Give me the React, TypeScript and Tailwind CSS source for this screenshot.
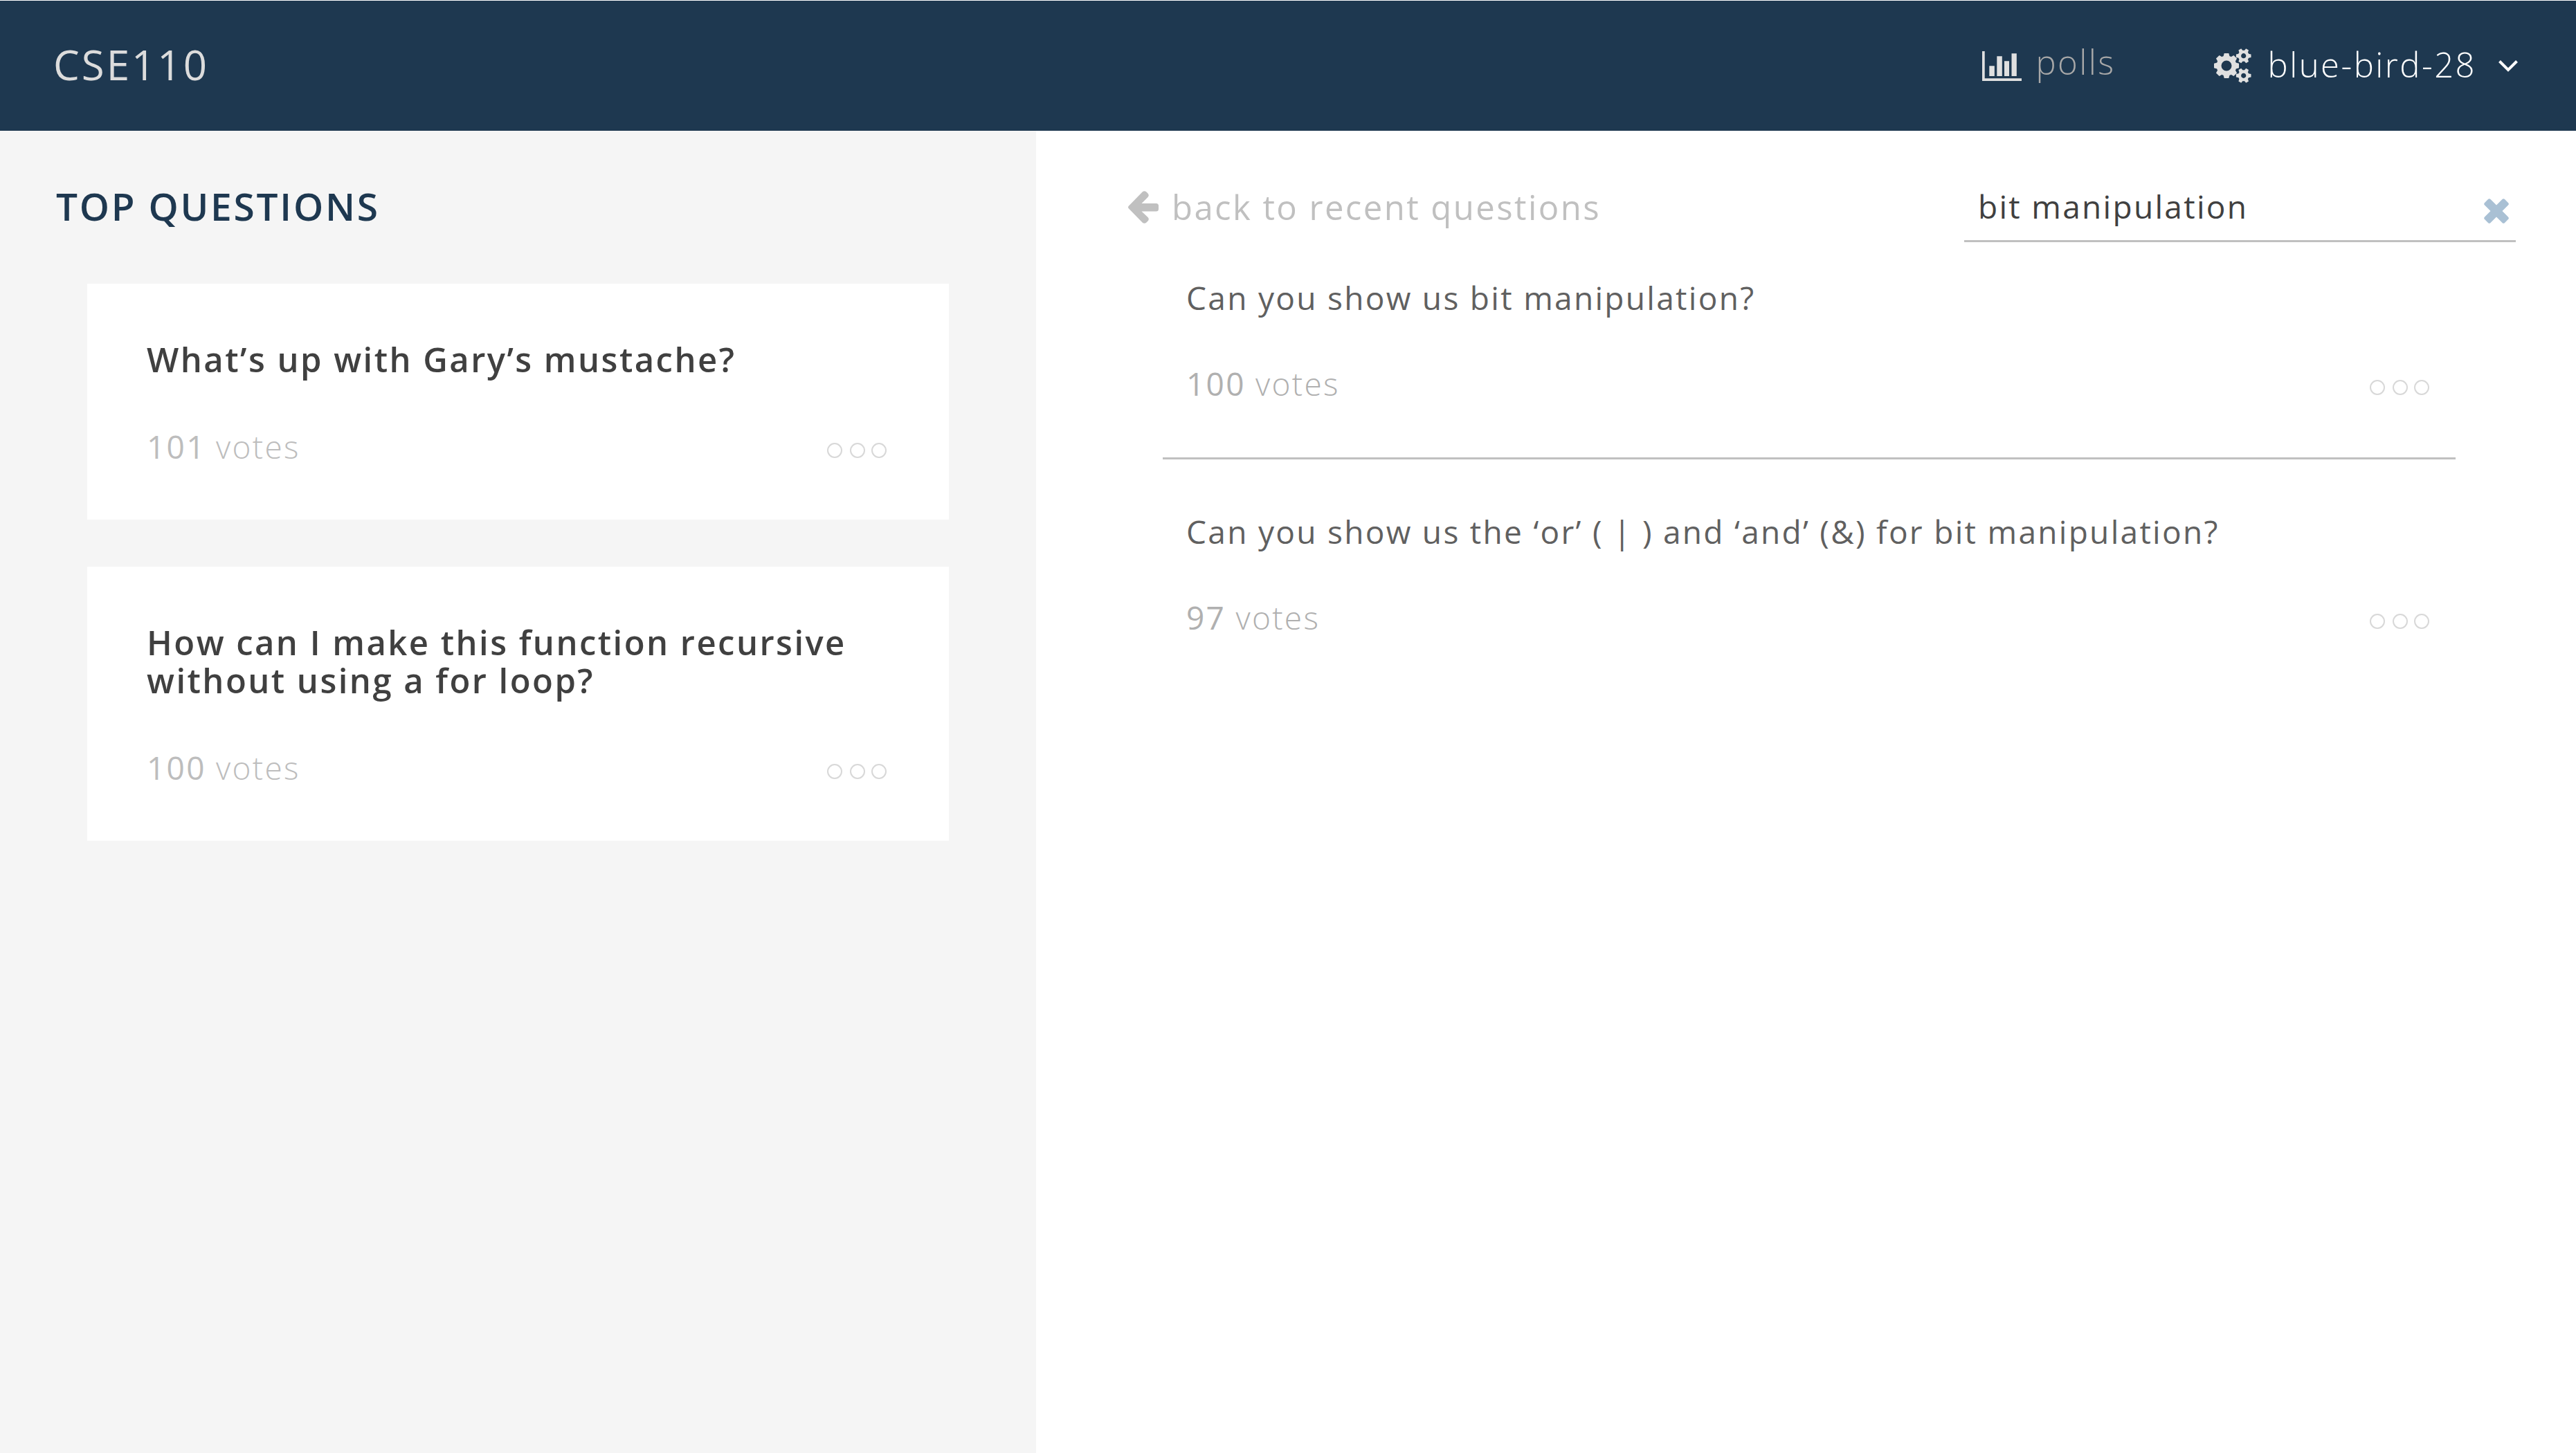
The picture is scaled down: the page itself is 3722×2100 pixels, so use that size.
type Question = { title: string; votes: number };

const topQuestions: Question[] = [
  { title: "What’s up with Gary’s mustache?", votes: 101 },
  { title: "How can I make this function recursive without using a for loop?", votes: 100 },
];

const results: Question[] = [
  { title: "Can you show us bit manipulation?", votes: 100 },
  { title: "Can you show us the ‘or’ ( | ) and ‘and’ (&) for bit manipulation?", votes: 97 },
];

function BarChartIcon() {
  return (
    <svg viewBox="0 0 57 43" className="h-[43px] w-[57px] fill-[#e0e0e0]" aria-hidden="true">
      <path d="M0 0h3.700v39.300H57V43H0zM10.300 21.300h7.500v14.700h-7.500zM21.300 7.300h7.500V36h-7.500zM32 14.300h7V36h-7zM42.500 3.300h7.300V36h-7.300z" />
    </svg>
  );
}

const bigTeeth = [0, 45, 90, 135, 180, 225, 270, 315];
const smallTeeth = [30, 90, 150, 210, 270, 330];

function SmallGear({ cy }: { cy: number }) {
  return (
    <g transform={`translate(42.7 ${cy})`}>
      <circle r="5.800" fill="none" stroke="currentColor" strokeWidth="4.400" />
      {smallTeeth.map((a) => (
        <path key={a} d="M-3-7L-2.200-10.800H2.200L3-7z" transform={`rotate(${a})`} />
      ))}
    </g>
  );
}

function GearsIcon() {
  return (
    <svg viewBox="0 0 54 50" className="h-[50px] w-[54px] fill-current text-[#e0e0e0]" aria-hidden="true">
      <g transform="translate(18 25)">
        <circle r="11" fill="none" stroke="currentColor" strokeWidth="7" />
        {bigTeeth.map((a) => (
          <path key={a} d="M-4.500-13.500L-3.300-18H3.300L4.500-13.500z" transform={`rotate(${a})`} />
        ))}
      </g>
      <SmallGear cy={10.7} />
      <SmallGear cy={39.3} />
    </svg>
  );
}

function MoreButton() {
  return (
    <button type="button" aria-label="More options" className="cursor-pointer pt-3">
      <svg viewBox="0 0 86 22" className="h-[22px] w-[86px] fill-none stroke-[#d8d8d8] stroke-2" aria-hidden="true">
        <circle cx="11" cy="11" r="10" />
        <circle cx="44" cy="11" r="10" />
        <circle cx="75" cy="11" r="10" />
      </svg>
    </button>
  );
}

function Votes({ count, className }: { count: number; className: string }) {
  return (
    <p className={"text-[46px] leading-[56px] font-light tracking-wider " + className}>
      <span className="font-normal">{count}</span> votes
    </p>
  );
}

export default function App() {
  return (
    <div className="flex min-h-screen flex-col bg-white pt-px font-['Open_Sans',sans-serif]">
      <header className="flex h-[188px] items-center justify-between bg-[#1e3850] pr-[84px] pl-[77px]">
        <h1 className="pb-1 text-[60px] leading-[80px] tracking-wider text-[#dcdcdc]">CSE110</h1>
        <nav className="flex items-center gap-[142px] font-light">
          <a href="#polls" className="flex items-center gap-5 text-[49px] leading-[64px] tracking-wider text-[#a8a8a8]">
            <BarChartIcon />
            <span className="pb-3">polls</span>
          </a>
          <button
            type="button"
            className="flex cursor-pointer items-center gap-6 text-[49px] leading-[64px] tracking-wider text-white"
          >
            <GearsIcon />
            <span className="pb-1">blue-bird-28</span>
            <svg viewBox="0 0 28 17" className="ml-2 h-[17px] w-[28px]" aria-hidden="true">
              <path d="M1.500 1.500L14 14 26.500 1.500" fill="none" stroke="currentColor" strokeWidth="4" />
            </svg>
          </button>
        </nav>
      </header>
      <div className="flex flex-1">
        <aside className="w-[1497px] shrink-0 bg-[#f5f5f5] pt-[73px] pr-[126px] pl-[81px]">
          <h2 className="text-[55px] leading-[72px] font-semibold tracking-wider text-[#1e3850]">TOP QUESTIONS</h2>
          <ul className="mt-[76px] ml-[45px] flex flex-col gap-[68px]">
            {topQuestions.map((q) => (
              <li key={q.title} className="bg-white pt-[82px] pr-[90px] pb-[78px] pl-[86px]">
                <h3 className="-mr-10 text-[49px] leading-[55px] font-semibold tracking-wider text-[#404040]">
                  {q.title}
                </h3>
                <div className="mt-[70px] flex items-center justify-between">
                  <Votes count={q.votes} className="text-[#bdbdbd]" />
                  <MoreButton />
                </div>
              </li>
            ))}
          </ul>
        </aside>
        <main className="min-w-0 flex-1 pt-[74px] pr-[87px] pl-[133px]">
          <div className="flex items-start justify-between">
            <a
              href="#recent"
              className="flex items-center gap-[19px] pt-1 text-[49px] leading-[64px] tracking-wider text-[#c0c0c0]"
            >
              <svg viewBox="0 0 44 47" className="h-[47px] w-[44px] fill-current" aria-hidden="true">
                <path d="M1 21.500L20.500 1.500Q23.500-1.200 26.500 1.500L28.500 3.500Q31 6.300 28.500 9L19.500 18H40.500Q44 18 44 21.500V26Q44 29.500 40.500 29.500H19.500L28.500 38Q31 40.700 28.500 43.500L26.500 45.500Q23.500 48.200 20.500 45.500L1 25.500Q-1 23.500 1 21.500z" />
              </svg>
              back to recent questions
            </a>
            <form className="flex w-[797px] items-end border-b-3 border-[#c0c0c0] pr-[10px] pb-[14px] pl-[20px]">
              <input
                type="text"
                aria-label="Search questions"
                defaultValue="bit manipulation"
                className="h-[70px] min-w-0 flex-1 text-[46px] leading-[70px] tracking-wider text-[#404040] outline-none"
              />
              <button type="button" aria-label="Clear search" className="cursor-pointer pb-[10px] text-[#a9c0d4]">
                <svg viewBox="-18 -18 36 36" className="block size-[36px] fill-current" aria-hidden="true">
                  <rect x="-20.500" y="-6" width="41" height="12" rx="2.500" transform="rotate(45)" />
                  <rect x="-20.500" y="-6" width="41" height="12" rx="2.500" transform="rotate(-45)" />
                </svg>
              </button>
            </form>
          </div>
          <ul className="pr-[87px] pl-[50px]">
            {results.map((q) => (
              <li
                key={q.title}
                className="border-b-3 border-[#c0c0c0] pt-[72px] pr-[38px] pb-[79px] pl-[34px] first:pt-[48px] last:border-b-0"
              >
                <h3 className="text-[46px] leading-[64px] tracking-wider text-[#606060]">{q.title}</h3>
                <div className="mt-[64px] flex items-center justify-between">
                  <Votes count={q.votes} className="text-[#b0b0b0]" />
                  <MoreButton />
                </div>
              </li>
            ))}
          </ul>
        </main>
      </div>
    </div>
  );
}
